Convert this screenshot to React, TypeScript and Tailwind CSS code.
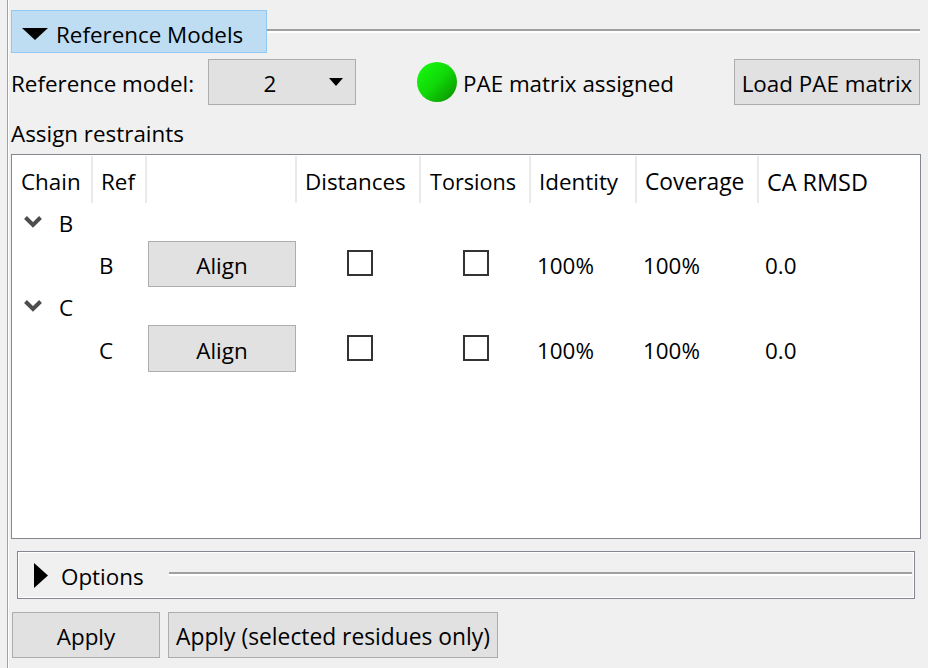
import React from 'react';

const FONT = "font-['Open_Sans','Noto_Sans',sans-serif]";
const BTN = 'flex items-center justify-center border border-[#adadad] bg-[#e1e1e1] text-black pt-[4px]';

function Groove({ className = '' }: { className?: string }) {
  return <div className={`h-[4px] bg-[#a0a0a0] border-b-2 border-white ${className}`} />;
}

function Check() {
  return <div className="w-[26px] h-[26px] border-2 border-[#333333] bg-white" />;
}

function ChainGroup({ chain, rowH }: { chain: string; rowH: string }) {
  return (
    <>
      <div className="h-[38px] flex items-center pl-[12px] gap-[16px]">
        <svg width="18" height="12" viewBox="0 0 18 12" className="shrink-0">
          <path d="M1.5 1.5 L9 9 L16.5 1.5" fill="none" stroke="#4d4d4d" strokeWidth="4" />
        </svg>
        <span className="w-4 text-center pt-[4px]">{chain}</span>
      </div>
      <div className={`grid grid-cols-[80px_56px_149px_124px_110px_106px_122px_1fr] items-center ${rowH}`}>
        <div />
        <div className="pl-[7px] pt-[4px]">{chain}</div>
        <button className={`${BTN} w-[148px] h-full`}>Align</button>
        <div className="flex justify-center pl-[2px] mb-[2px]"><Check /></div>
        <div className="flex justify-center mb-[2px]"><Check /></div>
        <div className="pl-[6px] pt-[4px]">100%</div>
        <div className="pl-[6px] pt-[4px]">100%</div>
        <div className="pl-[6px] pt-[4px]">0.0</div>
      </div>
    </>
  );
}

export default function App() {
  const headers = [
    ['Chain', 'w-[81px] pl-[9px]'],
    ['Ref', 'w-[54px] pl-[8px]'],
    ['', 'w-[150px]'],
    ['Distances', 'w-[124px] pl-[8px]'],
    ['Torsions', 'w-[110px] pl-[9px] text-[21.6px]'],
    ['Identity', 'w-[106px] pl-[8px]'],
    ['Coverage', 'w-[122px] pl-[8px] text-[22.8px]'],
    ['CA RMSD', 'w-[160px] pl-[8px] text-[23.4px]'],
  ];

  return (
    <div className={`w-[928px] h-[668px] overflow-hidden bg-[#f0f0f0] text-black text-[22.4px] leading-[24px] flex ${FONT}`}>
      <div className="w-[11px] shrink-0 flex">
        <div className="w-[7px]" />
        <div className="w-[1px] bg-[#a0a0a0]" />
        <div className="w-[1px] bg-white" />
      </div>

      <div className="w-[910px] flex flex-col pt-[10px]">
        {/* section header */}
        <div className="flex h-[43px]">
          <div className="w-[256px] flex items-center gap-[8px] pl-[10px] pt-[7px] bg-[#bedcf2] border border-[#90c8f6]">
            <svg width="26" height="14" viewBox="0 0 26 14" className="shrink-0 -mt-[2px]">
              <path d="M0 1 H26 L13 13 Z" fill="#000" />
            </svg>
            <span>Reference Models</span>
          </div>
          <Groove className="flex-1 mt-[19px] mr-[1px]" />
        </div>

        {/* model row */}
        <div className="flex items-center h-[46px] mt-[6px]">
          <span className="w-[197px] pt-[4px]">Reference model:</span>
          <div className={`${BTN} w-[148px] h-full relative`}>
            <span className="pr-[24px]">2</span>
            <svg width="14" height="8" viewBox="0 0 14 8" className="absolute right-[12px] top-[18px]">
              <path d="M0 0 H14 L7 8 Z" fill="#000" />
            </svg>
          </div>
          <div className="w-[40px] h-[40px] ml-[61px] rounded-full bg-gradient-to-br from-[#18ff10] via-[#10d808] to-[#0a8a00]" />
          <span className="ml-[6px] w-[271px] pt-[4px]">PAE matrix assigned</span>
          <button className={`${BTN} w-[186px] h-full pt-[2px]`}>Load PAE matrix</button>
        </div>

        <div className="h-[49px] flex items-end pb-[8px]">Assign restraints</div>

        {/* table */}
        <div className="w-[910px] h-[385px] border border-[#828790] bg-white">
          <div className="flex h-[47px] mt-[1px]">
            {headers.map(([label, cls], i) => (
              <div key={i} className={`${cls} h-full flex items-center pt-[4px] border-r-2 border-[#eaeaea] shrink-0 last:border-r-0`}>
                {label}
              </div>
            ))}
          </div>
          <ChainGroup chain="B" rowH="h-[46px]" />
          <ChainGroup chain="C" rowH="h-[47px]" />
        </div>

        {/* options */}
        <div className="w-[898px] h-[48px] ml-[6px] mt-[12px] flex items-center border border-[#828790] shadow-[inset_0_0_0_1px_#ffffff] pr-[2px]">
          <svg width="14" height="25" viewBox="0 0 14 25" className="shrink-0 ml-[16px]">
            <path d="M0 0 V25 L14 12.5 Z" fill="#000" />
          </svg>
          <span className="ml-[13px] pt-[4px]">Options</span>
          <Groove className="flex-1 ml-[25px] -mt-[2px]" />
        </div>

        {/* actions */}
        <div className="flex gap-[8px] h-[46px] mt-[13px] pl-[1px]">
          <button className={`${BTN} w-[148px]`}>Apply</button>
          <button className={`${BTN} w-[330px] text-[22.8px]`}>Apply (selected residues only)</button>
        </div>
      </div>
    </div>
  );
}
